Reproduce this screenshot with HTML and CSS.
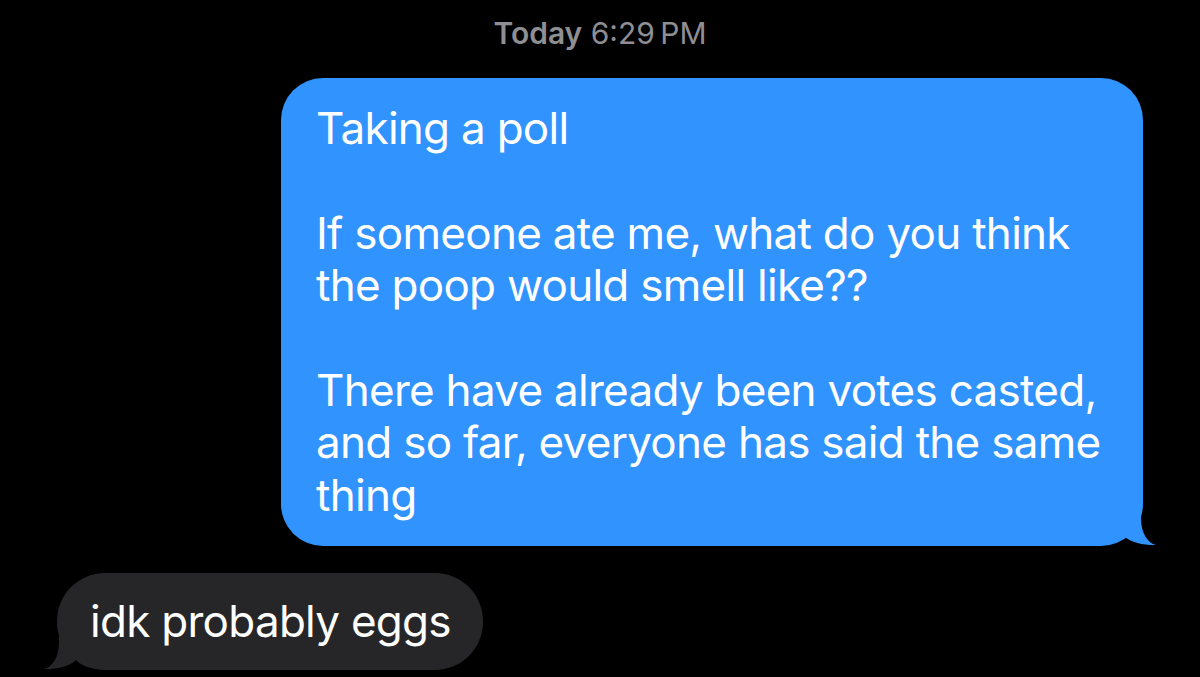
FILE: index.html
```html
<!DOCTYPE html>
<html lang="en">
<head>
    <meta charset="UTF-8">
    <meta name="viewport" content="width=device-width, initial-scale=1.0">
    <title>Messages</title>
    <link rel="stylesheet" href="styles.css">
</head>
<body>
    <div class="thread">
        <div class="stamp"><strong>Today</strong> 6:29&#8201;PM</div>

        <div class="row row-sent">
            <div class="bubble sent">
                Taking a poll<br>
                <br>
                If someone ate me, what do you think<br>
                the poop would smell like??<br>
                <br>
                There have already been votes casted,<br>
                and so far, everyone has said the same<br>
                thing
                <svg class="tail" width="60" height="48" viewBox="0 0 60 48">
                    <path d="M43 0 L43 20 C43 36 50 45 58 47 C48 47.5 33 45 26 38 C20 44 12 47 0 47 Z"/>
                </svg>
            </div>
        </div>

        <div class="row row-received">
            <div class="bubble received">
                idk probably eggs
                <svg class="tail" width="60" height="48" viewBox="0 0 60 48">
                    <path d="M43 0 L43 20 C43 36 50 45 58 47 C48 47.5 33 45 26 38 C20 44 12 47 0 47 Z"/>
                </svg>
            </div>
        </div>
    </div>
</body>
</html>
```

FILE: styles.css
```css
* {
    margin: 0;
    padding: 0;
    box-sizing: border-box;
}
body {
    background: #000;
    font-family: Inter, "Noto Sans", sans-serif;
    color: #fff;
    height: 677px;
    overflow: hidden;
}
.thread {
    display: flex;
    flex-direction: column;
    padding-top: 16px;
}
.stamp {
    text-align: center;
    color: #8e8e93;
    font-size: 30px;
    line-height: 34px;
    margin-bottom: 28px;
}
.stamp strong {
    font-weight: 600;
}
.row {
    display: flex;
}
.row-sent {
    justify-content: flex-end;
    padding-right: 57px;
}
.row-received {
    justify-content: flex-start;
    padding-left: 57px;
    margin-top: 27px;
}
.bubble {
    position: relative;
    font-size: 44px;
    line-height: 52.4px;
    white-space: nowrap;
    letter-spacing: -0.72px;
}
.sent {
    width: 862px;
    padding: 24px 35px 25px;
    background: #3093fe;
    border-radius: 42px;
}
.received {
    width: 426px;
    padding: 22px 33px;
    background: #262628;
    border-radius: 48px;
}
.tail {
    position: absolute;
    bottom: 0;
    display: block;
}
.sent .tail {
    right: -15px;
    fill: #3093fe;
}
.received .tail {
    left: -15px;
    fill: #262628;
    transform: scaleX(-1);
}
```
